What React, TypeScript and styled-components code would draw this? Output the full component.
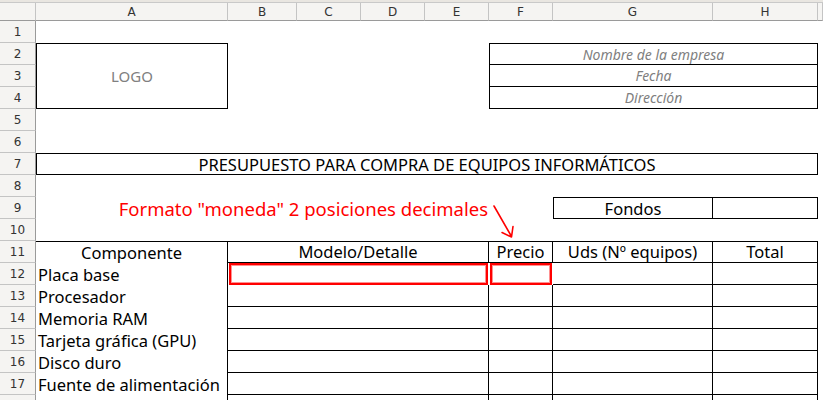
import React from 'react';
import styled, { createGlobalStyle } from 'styled-components';

const GlobalStyle = createGlobalStyle`
  html, body {
    margin: 0;
    padding: 0;
    background: #fff;
  }
  body {
    font-family: "Noto Sans", sans-serif;
  }
`;

const Sheet = styled.div`
  position: relative;
  width: 823px;
  height: 400px;
  overflow: hidden;
  background: #fff;
`;

const TopStrip = styled.div`
  height: 2px;
  background: #e9e6e1;
  border-bottom: 1px solid #c9c9c9;
`;

const Grid = styled.div`
  display: grid;
  grid-template-columns: 36px 192px 69px 64px 64px 64px 64px 160px 105px 1fr;
  grid-template-rows: 18px repeat(18, 22px);
`;

const ColHead = styled.div`
  grid-row: 1;
  box-sizing: border-box;
  display: flex;
  align-items: center;
  justify-content: center;
  background: #f5f4f2;
  border-right: 1px solid #c4c4c4;
  border-bottom: 1px solid #9a9a9a;
  font-family: "DejaVu Sans", sans-serif;
  font-size: 12px;
  color: #333;
`;

const RowHead = styled.div<{ $row: number }>`
  grid-column: 1;
  grid-row: ${(p) => p.$row + 1};
  box-sizing: border-box;
  display: flex;
  align-items: center;
  justify-content: center;
  background: #f5f4f2;
  border-right: 1px solid #9a9a9a;
  border-bottom: 1px solid #c4c4c4;
  font-family: "DejaVu Sans", sans-serif;
  font-size: 12px;
  color: #333;
`;

const line = '1px solid #000';

const Cell = styled.div<{
  $c: number;
  $s?: number;
  $row: number;
  $rs?: number;
  $t?: boolean;
  $r?: boolean;
  $b?: boolean;
  $l?: boolean;
}>`
  grid-column: ${(p) => p.$c} / span ${(p) => p.$s ?? 1};
  grid-row: ${(p) => p.$row + 1} / span ${(p) => p.$rs ?? 1};
  box-sizing: border-box;
  display: flex;
  align-items: center;
  justify-content: center;
  border-top: ${(p) => (p.$t ? line : 'none')};
  border-right: ${(p) => (p.$r ? line : 'none')};
  border-bottom: ${(p) => (p.$b ? line : 'none')};
  border-left: ${(p) => (p.$l ? line : 'none')};
  padding: 0 2px;
  font-size: 16.5px;
  color: #000;
  white-space: nowrap;
`;

const LogoCell = styled(Cell)`
  font-size: 15px;
  color: #808080;
`;

const InfoCell = styled(Cell)`
  font-size: 14px;
  font-style: italic;
  color: #808080;
`;

const TitleCell = styled(Cell)`
  font-size: 16.5px;
`;

const HeadCell = styled(Cell)`
  align-items: flex-end;
  line-height: 20px;
`;

const ItemCell = styled(Cell)`
  justify-content: flex-start;
`;

const Marked = styled(Cell)`
  margin: 0 1px;
  border: 2px solid #ff0000;
  box-shadow: inset 0 0 0 1px #ff9090;
`;

const Note = styled(Cell)`
  justify-content: flex-end;
  overflow: visible;
  padding-right: 1px;
  font-size: 18.5px;
  color: #ff0000;
`;

const Arrow = styled.svg`
  position: absolute;
  left: 488px;
  top: 200px;
  pointer-events: none;
`;

const letters = ['', 'A', 'B', 'C', 'D', 'E', 'F', 'G', 'H', ''];
const info = ['Nombre de la empresa', 'Fecha', 'Dirección'];
const items = [
  'Placa base',
  'Procesador',
  'Memoria RAM',
  'Tarjeta gráfica (GPU)',
  'Disco duro',
  'Fuente de alimentación',
  '',
];

export default function App() {
  return (
    <Sheet>
      <GlobalStyle />
      <TopStrip />
      <Grid>
        {letters.map((l, i) => (
          <ColHead key={i}>{l}</ColHead>
        ))}
        {Array.from({ length: 18 }, (_, i) => (
          <RowHead key={i} $row={i + 1}>
            {i + 1}
          </RowHead>
        ))}

        <LogoCell $c={2} $row={2} $rs={3} $t $r $b $l>
          LOGO
        </LogoCell>
        {info.map((t, i) => (
          <InfoCell key={t} $c={7} $s={3} $row={i + 2} $t={i === 0} $r $b $l>
            {t}
          </InfoCell>
        ))}

        <TitleCell $c={2} $s={8} $row={7} $t $r $b $l>
          PRESUPUESTO PARA COMPRA DE EQUIPOS INFORMÁTICOS
        </TitleCell>

        <Note $c={2} $s={5} $row={9}>
          Formato "moneda" 2 posiciones decimales
        </Note>
        <Cell $c={8} $row={9} $t $r $b $l>
          Fondos
        </Cell>
        <Cell $c={9} $row={9} $t $r $b />

        <HeadCell $c={2} $row={11} $t $r>
          Componente
        </HeadCell>
        <HeadCell $c={3} $s={4} $row={11} $t $r $b>
          Modelo/Detalle
        </HeadCell>
        <HeadCell $c={7} $row={11} $t $r $b>
          Precio
        </HeadCell>
        <HeadCell $c={8} $row={11} $t $r $b>
          Uds (Nº equipos)
        </HeadCell>
        <HeadCell $c={9} $row={11} $t $r $b>
          Total
        </HeadCell>

        {items.map((t, i) => {
          const row = 12 + i;
          return (
            <React.Fragment key={row}>
              <ItemCell $c={2} $row={row} $r>
                {t}
              </ItemCell>
              {i === 0 ? (
                <>
                  <Marked $c={3} $s={4} $row={row} />
                  <Marked $c={7} $row={row} />
                </>
              ) : (
                <>
                  <Cell $c={3} $s={4} $row={row} $r $b />
                  <Cell $c={7} $row={row} $r $b />
                </>
              )}
              <Cell $c={8} $row={row} $r $b />
              <Cell $c={9} $row={row} $r $b />
            </React.Fragment>
          );
        })}
      </Grid>
      <Arrow width="30" height="42" viewBox="0 0 30 42">
        <path
          d="M6 6 L23.5 36.5 M14 32.5 L23.5 37 L25 26.5"
          stroke="#ff0000"
          strokeWidth="1.6"
          fill="none"
          strokeLinecap="round"
          strokeLinejoin="round"
        />
      </Arrow>
    </Sheet>
  );
}
